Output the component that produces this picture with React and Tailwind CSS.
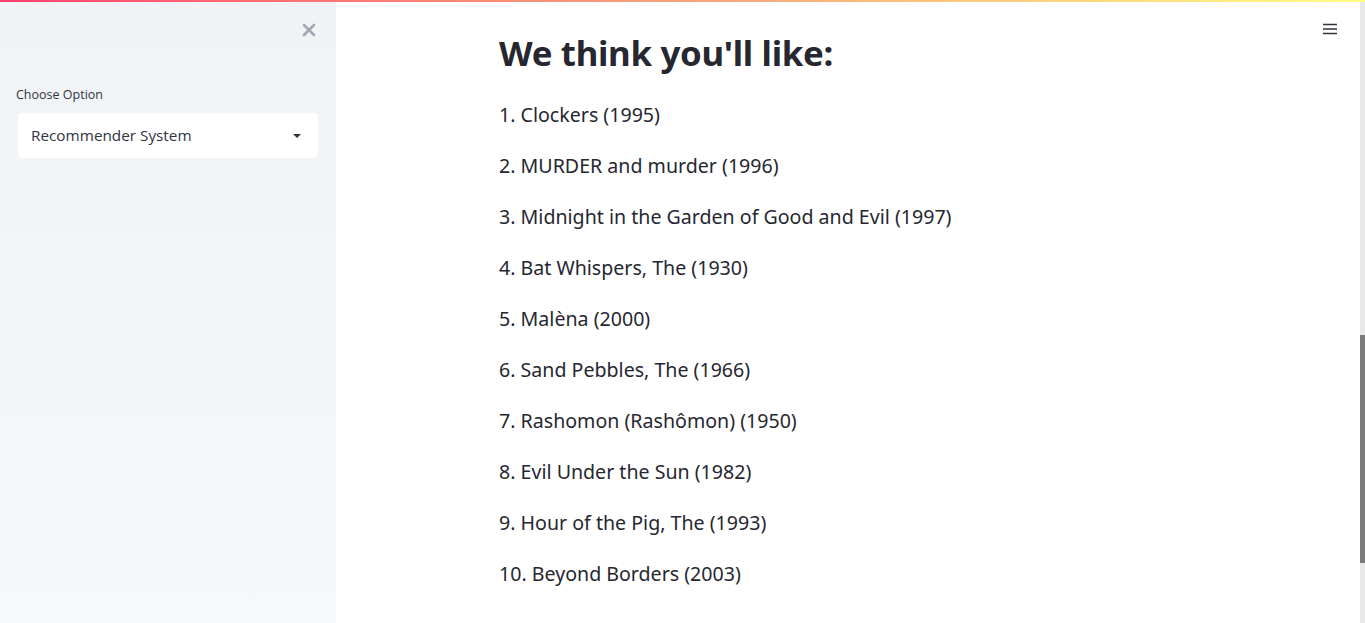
import React from "react";

const movies = [
  "Clockers (1995)",
  "MURDER and murder (1996)",
  "Midnight in the Garden of Good and Evil (1997)",
  "Bat Whispers, The (1930)",
  "Malèna (2000)",
  "Sand Pebbles, The (1966)",
  "Rashomon (Rashômon) (1950)",
  "Evil Under the Sun (1982)",
  "Hour of the Pig, The (1993)",
  "Beyond Borders (2003)",
];

export default function App() {
  return (
    <div className="relative w-[1365px] h-[623px] overflow-hidden bg-white" style={{ fontFamily: '"Noto Sans", sans-serif' }}>
      <div className="absolute top-0 left-0 right-0 h-[2px] z-10 bg-gradient-to-r from-[#ff3d6e] via-[#f6a27a] to-[#fffd80]" />
      <div className="flex h-full">
        <aside className="w-[336px] shrink-0 h-full bg-gradient-to-b from-[#f0f2f6] to-[#f7f8fa] flex flex-col">
          <div className="flex justify-end pt-[20px] pr-[20px] h-[80px]">
            <svg width="14" height="14" viewBox="0 0 14 14" className="mt-[3px]">
              <path d="M2 2 L12 12 M12 2 L2 12" stroke="#a3a8b4" strokeWidth="2.6" strokeLinecap="round" />
            </svg>
          </div>
          <div className="px-4 pt-[7px]">
            <div className="text-[12.5px] text-[#31333f] mb-[10px] leading-[16px]" style={{ fontFamily: '"Open Sans", sans-serif' }}>Choose Option</div>
            <div className="ml-[2px] w-[300px] h-[45px] bg-white rounded-[4px] flex items-center justify-between pl-[13px] pr-[16px]">
              <span className="text-[15.3px] text-[#31333f]" style={{ fontFamily: '"Open Sans", sans-serif' }}>Recommender System</span>
              <svg width="10" height="6" viewBox="0 0 10 6"><path d="M1 1 L9 1 L5 5 Z" fill="#31333f" /></svg>
            </div>
          </div>
        </aside>
        <main className="flex-1 h-full relative">
          <div className="absolute top-[23px] right-[23px]">
            <svg width="14" height="12" viewBox="0 0 14 12">
              <path d="M0 1.5 H14 M0 6 H14 M0 10.5 H14" stroke="#31333f" strokeWidth="1.6" />
            </svg>
          </div>
          <div className="flex justify-center">
            <div className="w-[730px] px-4 pt-[30px] text-[#262730]">
              <h2 className="text-[34.8px] font-bold leading-[46px] tracking-[-0.3px] mb-[24px]">We think you'll like:</h2>
              <ol className="flex flex-col gap-[21px]">
                {movies.map((m, i) => (
                  <li key={i} className="text-[19.6px] leading-[30px]">{i + 1}. {m}</li>
                ))}
              </ol>
            </div>
          </div>
        </main>
        <div className="w-[5px] h-full bg-[#e8e8e8] relative">
          <div className="absolute left-0 right-0 top-[335px] h-[228px] bg-[#7a7a7a]" />
        </div>
      </div>
    </div>
  );
}
